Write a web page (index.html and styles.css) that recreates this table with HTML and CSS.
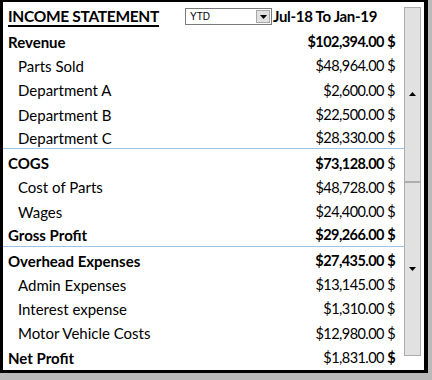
FILE: index.html
```html
<!DOCTYPE html>
<html>
<head>
<meta charset="utf-8">
<link rel="stylesheet" href="styles.css">
</head>
<body>
<div class="frame">
  <div class="sheet">
    <div class="rows">
      <div class="title-row">
        <div class="title-cell"><span class="title">INCOME STATEMENT</span></div>
        <div class="combo">
          <span class="combo-text">YTD</span>
          <span class="combo-btn"><svg width="7" height="4" viewBox="0 0 7 4"><path d="M0 0H7L3.5 4Z" fill="#000"/></svg></span>
        </div>
        <span class="period">Jul-18 To Jan-19</span>
      </div>
      <div class="row head"><span class="label">Revenue</span><span class="amt"><b>$102,394.00</b> <b>$</b></span></div>
      <div class="row sub"><span class="label">Parts Sold</span><span class="amt">$48,964.00 $</span></div>
      <div class="row sub"><span class="label">Department A</span><span class="amt">$2,600.00 $</span></div>
      <div class="row sub"><span class="label">Department B</span><span class="amt">$22,500.00 $</span></div>
      <div class="row sub sep"><span class="label">Department C</span><span class="amt">$28,330.00 $</span></div>
      <div class="row head"><span class="label">COGS</span><span class="amt"><b>$73,128.00</b> $</span></div>
      <div class="row sub"><span class="label">Cost of Parts</span><span class="amt">$48,728.00 $</span></div>
      <div class="row sub"><span class="label">Wages</span><span class="amt">$24,400.00 $</span></div>
      <div class="row head sep"><span class="label">Gross Profit</span><span class="amt"><b>$29,266.00</b> <b>$</b></span></div>
      <div class="row head"><span class="label">Overhead Expenses</span><span class="amt"><b>$27,435.00</b> <b>$</b></span></div>
      <div class="row sub"><span class="label">Admin Expenses</span><span class="amt">$13,145.00 $</span></div>
      <div class="row sub"><span class="label">Interest expense</span><span class="amt">$1,310.00 $</span></div>
      <div class="row sub"><span class="label">Motor Vehicle Costs</span><span class="amt">$12,980.00 $</span></div>
      <div class="row head"><span class="label">Net Profit</span><span class="amt">$1,831.00 <b>$</b></span></div>
    </div>
    <div class="spin">
      <div class="spin-btn"><svg width="7" height="4" viewBox="0 0 7 4"><path d="M3.5 0L7 4H0Z" fill="#000"/></svg></div>
      <div class="spin-btn"><svg width="7" height="4" viewBox="0 0 7 4"><path d="M0 0H7L3.5 4Z" fill="#000"/></svg></div>
    </div>
  </div>
</div>
</body>
</html>
```
FILE: styles.css
```css
html, body {
  margin: 0;
  padding: 0;
}
body {
  width: 432px;
  height: 380px;
  background: #b9b9b9;
  font-family: Lato, "Liberation Sans", sans-serif;
  color: #000;
  overflow: hidden;
}
.frame {
  width: 428px;
  height: 373px;
  box-sizing: border-box;
  border-style: solid;
  border-color: #000;
  border-width: 2px 4px 3px 3px;
  background: #fff;
}
.sheet {
  display: flex;
  height: 100%;
}
.rows {
  width: 401px;
  display: flex;
  flex-direction: column;
}
.title-row {
  height: 27.5px;
  flex: none;
  display: flex;
  align-items: center;
}
.title-cell {
  width: 182px;
  box-sizing: border-box;
  padding-left: 5px;
}
.title {
  font-weight: 700;
  font-size: 15.5px;
  letter-spacing: -0.3px;
  text-decoration: underline;
  text-decoration-thickness: 1.5px;
  text-underline-offset: 3px;
}
.combo {
  width: 87px;
  height: 17px;
  box-sizing: border-box;
  border: 1px solid #7a7a7a;
  display: flex;
  align-items: center;
  justify-content: space-between;
  background: #fff;
  margin-top: 2px;
}
.combo-text {
  font-family: "Liberation Sans", sans-serif;
  font-size: 10px;
  padding-left: 4px;
}
.combo-btn {
  width: 14px;
  height: 13px;
  margin-right: 1px;
  box-sizing: border-box;
  background: #e1e1e1;
  border: 1px solid #a8a8a8;
  display: flex;
  align-items: center;
  justify-content: center;
}
.period {
  margin-left: 1px;
  font-weight: 700;
  font-size: 15px;
  letter-spacing: -0.3px;
}
.row {
  height: 24.3px;
  flex: none;
  display: flex;
  align-items: center;
  justify-content: space-between;
  padding: 0 9px 0 5px;
  font-size: 15px;
  box-sizing: border-box;
}
.row.head .label {
  font-weight: 700;
}
.row.sub .label {
  padding-left: 10px;
}
.row.sep {
  height: 22.8px;
  border-bottom: 1px solid #9dc3e6;
}
.row.sep + .row {
  height: 25.8px;
  padding-top: 2px;
}
.amt {
  font-size: 14.5px;
  letter-spacing: -0.55px;
}
.amt b {
  font-weight: 700;
}
.spin {
  width: 17px;
  margin: 5px 3px 14px 0;
  display: flex;
  flex-direction: column;
}
.spin-btn {
  flex: 1;
  box-sizing: border-box;
  background: #e1e1e1;
  border: 1px solid #adadad;
  display: flex;
  align-items: center;
  justify-content: center;
}
```
